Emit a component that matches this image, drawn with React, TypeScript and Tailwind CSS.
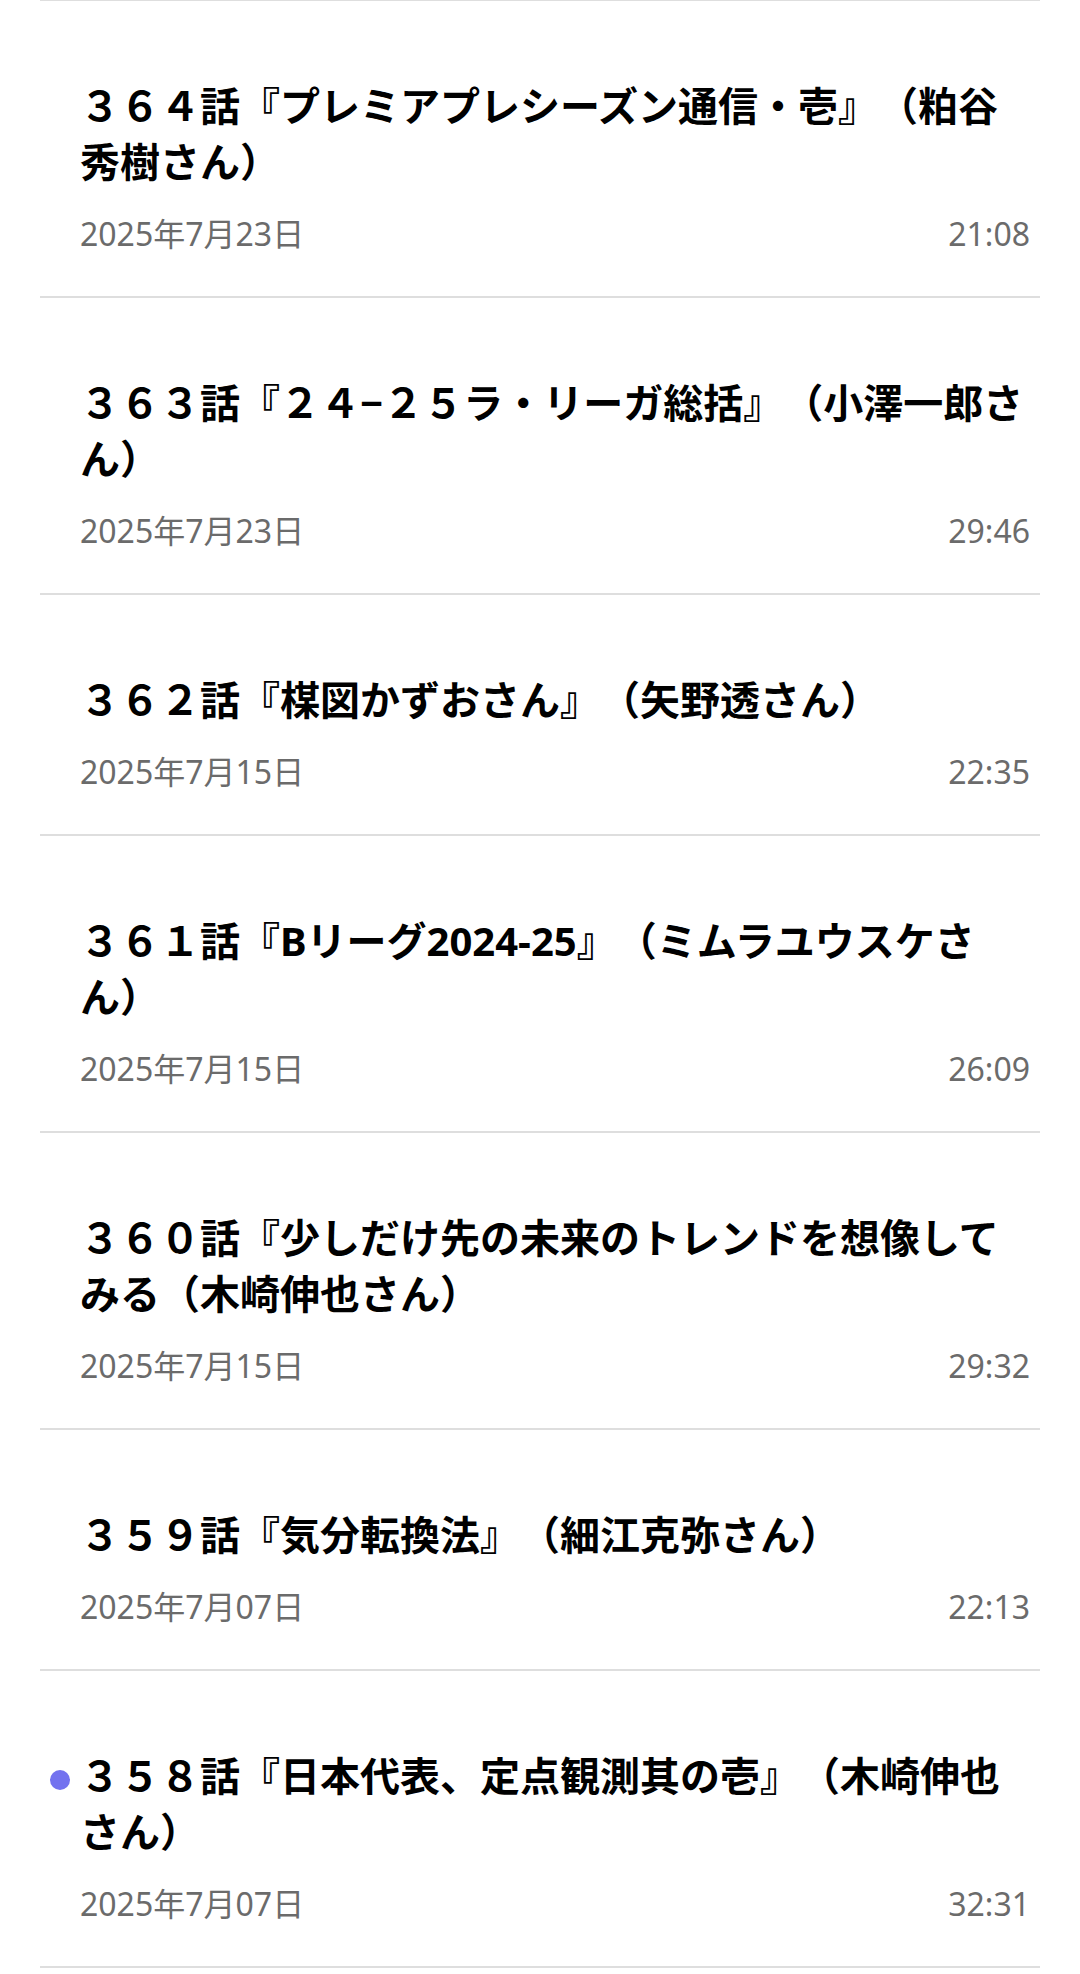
import clsx from "clsx";

interface Episode {
	title: string;
	date: string;
	duration: string;
	unplayed?: boolean;
}

const episodes: Episode[] = [
	{
		title: "３６４話『プレミアプレシーズン通信・壱』（粕谷秀樹さん）",
		date: "2025年7月23日",
		duration: "21:08",
	},
	{
		title: "３６３話『２４−２５ラ・リーガ総括』（小澤一郎さん）",
		date: "2025年7月23日",
		duration: "29:46",
	},
	{
		title: "３６２話『楳図かずおさん』（矢野透さん）",
		date: "2025年7月15日",
		duration: "22:35",
	},
	{
		title: "３６１話『Bリーグ2024-25』（ミムラユウスケさん）",
		date: "2025年7月15日",
		duration: "26:09",
	},
	{
		title: "３６０話『少しだけ先の未来のトレンドを想像してみる（木崎伸也さん）",
		date: "2025年7月15日",
		duration: "29:32",
	},
	{
		title: "３５９話『気分転換法』（細江克弥さん）",
		date: "2025年7月07日",
		duration: "22:13",
	},
	{
		title: "３５８話『日本代表、定点観測其の壱』（木崎伸也さん）",
		date: "2025年7月07日",
		duration: "32:31",
		unplayed: true,
	},
];

function EpisodeRow({ episode }: { episode: Episode }) {
	return (
		<li className="border-b-2 border-[#dedede] pl-10 pr-2.5 pt-[77px] pb-[38px]">
			{/* Title */}
			<div className="relative">
				{episode.unplayed && (
					<span className="absolute -left-[30px] top-[22px] h-5 w-5 rounded-full bg-[#7372ef]" />
				)}
				<p className="text-[40px] font-bold leading-[56px] text-black [text-spacing-trim:space-all]">
					{episode.title}
				</p>
			</div>

			{/* Date - Duration */}
			<div
				className={clsx(
					"mt-5 flex items-center justify-between",
					"text-[32px] leading-[48px] text-[#6b6b6b]"
				)}
			>
				<span>{episode.date}</span>
				<span>{episode.duration}</span>
			</div>
		</li>
	);
}

export default function App() {
	return (
		<div
			className="min-h-[1974px] w-full bg-white"
			style={{ fontFamily: '"Noto Sans", "Noto Sans CJK JP", sans-serif' }}
		>
			<ul className="mx-10 border-t border-[#dedede]">
				{episodes.map(episode => (
					<EpisodeRow key={episode.title} episode={episode} />
				))}
			</ul>
		</div>
	);
}
